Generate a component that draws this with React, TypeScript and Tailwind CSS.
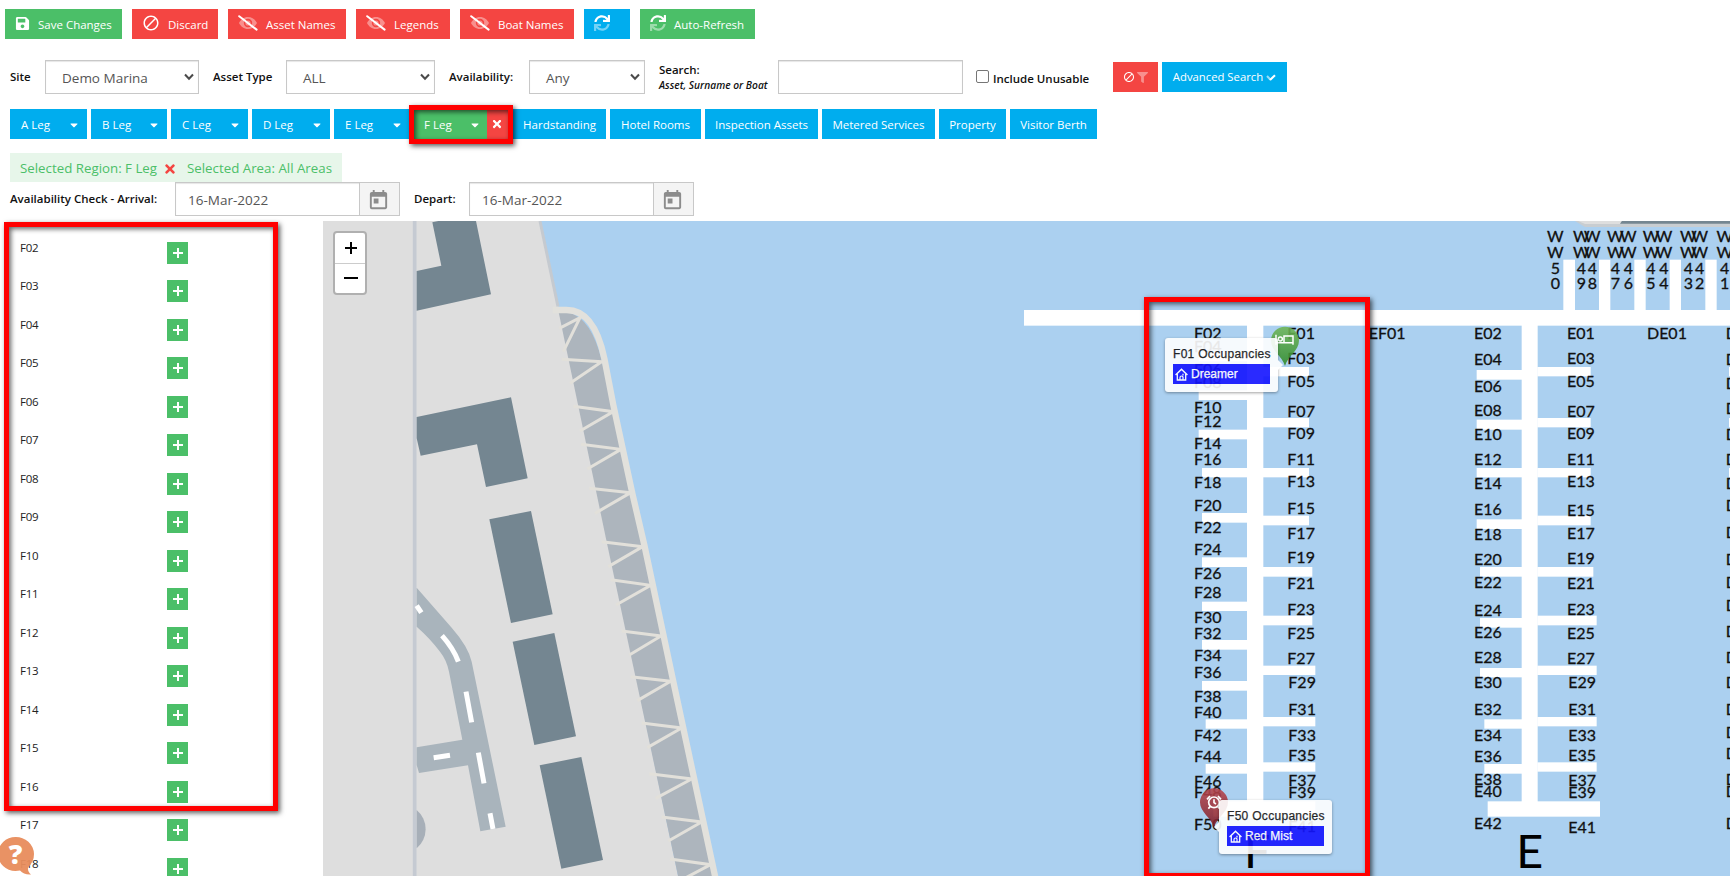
import React from "react";
import { FaSave, FaTimes, FaCaretDown, FaFilter } from "react-icons/fa";
import { MdBlock, MdToday } from "react-icons/md";

const BLUE = "bg-[#00adee]";
const GREEN = "bg-[#4bbf68]";
const RED = "bg-[#f44542]";

function EyeOff() {
  return (
    <svg viewBox="0 0 20 16" className="h-[16px] w-[20px]" fill="none">
      <path
        fillRule="evenodd"
        fill="#fff"
        opacity="0.4"
        d="M10 2C14 2 17.300 4.600 19 8 17.300 11.400 14 14 10 14S2.700 11.400 1 8C2.700 4.600 6 2 10 2ZM10 3.800A4.200 4.200 0 1 0 10 12.200A4.200 4.200 0 1 0 10 3.800ZM10 5.400A2.600 2.600 0 1 1 10 10.600A2.600 2.600 0 1 1 10 5.400Z"
      />
      <path d="M1.2 1.2 18.6 14.6" stroke="#fff" strokeWidth="2" strokeLinecap="round" />
    </svg>
  );
}

function Sync() {
  return (
    <svg viewBox="0 0 512 512" className="h-[16px] w-[16px]" fill="#fff">
      <path d="M440.65 12.57l4 82.77A247.16 247.16 0 0 0 255.83 8C134.73 8 33.91 94.92 12.29 209.82A12 12 0 0 0 24.09 224h49.05a12 12 0 0 0 11.67-9.26 175.91 175.91 0 0 1 317-56.94l-101.46-4.86a12 12 0 0 0-12.57 12v47.41a12 12 0 0 0 12 12H500a12 12 0 0 0 12-12V12a12 12 0 0 0-12-12h-47.37a12 12 0 0 0-11.98 12.57z" />
      <path
        opacity="0.45"
        d="M255.83 432a175.61 175.61 0 0 1-146-77.8l101.8 4.87a12 12 0 0 0 12.57-12v-47.4a12 12 0 0 0-12-12H12a12 12 0 0 0-12 12V500a12 12 0 0 0 12 12h47.35a12 12 0 0 0 12-12.6l-4.15-82.57A247.17 247.17 0 0 0 255.83 504c121.11 0 221.93-86.92 243.55-201.82a12 12 0 0 0-11.8-14.18h-49.05a12 12 0 0 0-11.67 9.26A175.86 175.86 0 0 1 255.83 432z"
      />
    </svg>
  );
}

function HouseIcon() {
  return (
    <svg viewBox="0 0 13 13" className="h-[13px] w-[13px]" fill="none" stroke="#fff">
      <path d="M0.600 7 6.500 1.200 12.400 7" strokeWidth="1.500" />
      <path d="M2.300 6V12H10.700V6" strokeWidth="1.300" />
      <path d="M5 12V9.500Q5 8 6.500 8T8 9V12M8 5.800V7.500" strokeWidth="1.200" />
    </svg>
  );
}

function ToolButton({ className, icon, label }: { className: string; icon: React.ReactNode; label?: string }) {
  return (
    <button className={`flex h-[30px] shrink-0 items-center pl-[10px] text-[11.5px] font-medium whitespace-nowrap text-white ${className}`}>
      <span className="-mt-[2px]">{icon}</span>
      {label && <span className="ml-[8px] pt-[2px]">{label}</span>}
    </button>
  );
}

function Select({ value, className }: { value: string; className: string }) {
  return (
    <div className={`flex h-[34px] shrink-0 items-center justify-between border border-[#c8c8c8] bg-white pr-[4px] pl-[16px] text-[13.5px] text-[#555] shadow-[inset_0_1px_1px_rgba(0,0,0,0.1)] ${className}`}>
      <span className="pt-[2px]">{value}</span>
      <svg viewBox="0 0 10 8" className="h-[8px] w-[10px]" fill="none" stroke="#4a4a4a" strokeWidth="2">
        <path d="M1 1.5 5 5.8 9 1.5" />
      </svg>
    </div>
  );
}

function DateInput({ value }: { value: string }) {
  return (
    <div className="flex h-[34px] w-[225px] shrink-0 border border-[#c8c8c8] shadow-[inset_0_1px_1px_rgba(0,0,0,0.1)]">
      <div className="flex flex-1 items-center pt-[3px] pl-[12px] text-[13.5px] text-[#555]">{value}</div>
      <div className="flex w-[40px] items-center justify-center border-l border-[#c8c8c8] bg-[#f4f4f4] pt-[2px] pr-[2px]">
        <MdToday className="h-[23px] w-[23px] text-[#8c8c8c]" />
      </div>
    </div>
  );
}

const LEGS = [
  { name: "A Leg", w: "w-[77px]" },
  { name: "B Leg", w: "w-[76px]" },
  { name: "C Leg", w: "w-[77px]" },
  { name: "D Leg", w: "w-[78px]" },
  { name: "E Leg", w: "w-[76px]" },
];

const AREAS = [
  { name: "Hardstanding", w: "w-[93px]" },
  { name: "Hotel Rooms", w: "w-[91px]" },
  { name: "Inspection Assets", w: "w-[113px]" },
  { name: "Metered Services", w: "w-[113px]" },
  { name: "Property", w: "w-[67px]" },
  { name: "Visitor Berth", w: "w-[87px]" },
];

const BERTHS = Array.from({ length: 17 }, (_, i) => `F${String(i + 2).padStart(2, "0")}`);

type Label = [string, number, number];

const column = (prefix: string, start: number, x: number, ys: number[]): Label[] =>
  ys.map((y, i) => [`${prefix}${String(start + i * 2).padStart(2, "0")}`, x, y]);

const LABELS: Label[] = [
  ...column("F", 2, 555, [372, 412, 482, 521, 595, 636, 704, 752, 820, 888, 956, 1020, 1093, 1151, 1224, 1273, 1340, 1391, 1461, 1509, 1579, 1643, 1716, 1750, 1846]),
  ...column("F", 1, 835, [372, 449, 517, 606, 672, 752, 818, 899, 972, 1046, 1122, 1201, 1272, 1347]),
  ...column("F", 29, 838, [1420, 1501, 1579, 1639, 1714, 1749, 1853]),
  ...column("E", 2, 1395, [372, 452, 531, 603, 677, 752, 822, 902, 977, 1050, 1120, 1204, 1269, 1345, 1421, 1500, 1578, 1642, 1710, 1748, 1843]),
  ...column("E", 1, 1674, [372, 449, 517, 606, 672, 752, 818, 904, 972, 1047, 1122, 1201, 1272, 1347]),
  ...column("E", 29, 1678, [1421, 1501, 1580, 1639, 1715, 1750, 1855]),
  ["EF01", 1079, 372],
  ["DE01", 1914, 372],
];

const D_ROWS = [372, 452, 524, 597, 677, 752, 822, 888, 970, 1050, 1120, 1190, 1268, 1345, 1421, 1500, 1570, 1633, 1712, 1747, 1842];

const WW: [string, number][] = [
  ["50", 1636], ["49", 1714], ["48", 1747], ["47", 1816], ["46", 1855], ["45", 1923],
  ["44", 1962], ["43", 2035], ["42", 2069], ["41", 2144],
];

// x, y, width, height
const DOCKS: [number, number, number, number][] = [
  [42, 285, 2120, 47],
  [711, 330, 49, 1480], [1535, 330, 48, 1450],
  [566, 410, 146, 29], [566, 526, 146, 29], [566, 644, 146, 29], [576, 759, 136, 28], [576, 894, 136, 29],
  [576, 1027, 136, 29], [576, 1160, 136, 28], [576, 1275, 136, 29], [576, 1398, 136, 29], [587, 1513, 125, 28], [587, 1647, 125, 29],
  [759, 456, 138, 28], [759, 609, 138, 28], [759, 759, 138, 28], [759, 902, 138, 29],
  [759, 1056, 148, 29], [759, 1202, 148, 29], [759, 1352, 157, 28], [759, 1506, 157, 28], [759, 1642, 157, 28], [610, 1759, 306, 46],
  [1400, 465, 136, 29], [1400, 614, 136, 30], [1400, 759, 136, 28], [1400, 913, 136, 29],
  [1410, 1056, 126, 29], [1410, 1209, 126, 29], [1410, 1359, 126, 28], [1423, 1513, 113, 28], [1423, 1647, 113, 29], [1433, 1759, 337, 46],
  [1582, 456, 160, 28], [1582, 609, 160, 28], [1582, 759, 160, 28], [1582, 902, 160, 29],
  [1582, 1056, 168, 29], [1582, 1202, 178, 29], [1582, 1352, 178, 28], [1582, 1506, 178, 28], [1582, 1642, 178, 28],
  [1660, 134, 35, 152], [1767, 134, 34, 152], [1873, 134, 34, 152], [1979, 134, 34, 152], [2086, 134, 34, 152],
  [2157, 456, 6, 28], [2157, 609, 6, 28], [2157, 759, 6, 28],
];

// apex on the rail followed by the two anchors on the quay
const STRUTS: number[][] = [
  [540, 308, 478, 340, 490, 410], [605, 440, 485, 433, 510, 505], [640, 590, 520, 574, 540, 648],
  [663, 703, 543, 688, 562, 762], [692, 833, 568, 820, 585, 895], [728, 995, 605, 980, 625, 1055],
  [752, 1111, 632, 1094, 648, 1170], [783, 1263, 665, 1248, 688, 1320], [812, 1399, 692, 1385, 712, 1457],
  [845, 1539, 725, 1524, 742, 1598], [875, 1692, 748, 1676, 767, 1750], [905, 1821, 785, 1806, 805, 1878],
  [932, 1949, 810, 1932, 850, 1992],
];

function Pin({ x, y, id, children }: { x: number; y: number; id: string; children: React.ReactNode }) {
  return (
    <g transform={`translate(${x} ${y})`}>
      <path d="M0 76C-8 46-42 30-42 0A42 42 0 0 1 42 0C42 30 8 46 0 76Z" fill={`url(#${id})`} opacity="0.88" />
      {children}
    </g>
  );
}

function MarinaMap() {
  return (
    <svg viewBox="323 221 1407 655" className="block h-[655px] w-[1407px]" fontFamily="Lato, sans-serif">
      <defs>
        <linearGradient id="green" x1="0" y1="0" x2="0" y2="1">
          <stop offset="0" stopColor="#6fb556" />
          <stop offset="1" stopColor="#2f8a2a" />
        </linearGradient>
        <linearGradient id="red" x1="0" y1="0" x2="0" y2="1">
          <stop offset="0" stopColor="#b8454c" />
          <stop offset="1" stopColor="#7c1c26" />
        </linearGradient>
      </defs>
      <rect x="323" y="221" width="1407" height="655" fill="#abd0f0" />

      <g transform="translate(400 215) scale(0.333333)">
        <path d="M-231 18H420L478 290L836 1992H-231Z" fill="#dedede" />
        <path d="M420 18 474 275" stroke="#c5cad0" strokeWidth="9" />
        <path d="M476 292H505Q575 310 606 440L735 1000 945 1992H836L622 990Z" fill="#adb5bd" />
        <g stroke="#e2e0da" strokeWidth="9" fill="none">
          {STRUTS.map((s) => (
            <path key={s[1]} d={`M${s[2]} ${s[3]} ${s[0]} ${s[1]} ${s[4]} ${s[5]}`} />
          ))}
        </g>
        <path d="M458 285H500C560 285 595 345 613 430L640 570 697 835 733 990 820 1400 947 1992" fill="none" stroke="#e2e1dc" strokeWidth="19" />
        <path d="M44 18V1992" stroke="#c5cad2" strokeWidth="11" />
        <g fill="#748691">
          <path d="M97 22 115 18H228L273 238 50 287V168L124 152Z" />
          <path d="M50 606 333 547 383 790 258 816 231 688 62 722 50 670Z" />
          <path d="M268 913 393 888 458 1198 333 1224Z" />
          <path d="M338 1280 463 1254 528 1564 403 1590Z" />
          <path d="M419 1651 544 1626 609 1935 484 1961Z" />
        </g>
        <path d="M50 1118 155 1238Q205 1295 215 1340L317 1835 241 1849 204 1651 57 1674 50 1650V1597L187 1574 147 1370Q140 1335 120 1310 90 1270 50 1235Z" fill="#a9b4bc" />
        <path d="M50 1785A75 75 0 0 1 50 1900Z" fill="#a7afb8" />
        <path d="M50 1172 64 1193M126 1262Q160 1300 175 1340M198 1430 215 1522M235 1613 252 1705M270 1795 279 1842M101 1628 150 1621" stroke="#fff" strokeWidth="15" fill="none" />
      </g>

      <g transform="translate(1010 215) scale(0.333333)">
        <path d="M1695 18H2160V36H1725Z" fill="#c8cdd1" />
        <path d="M1705 18H1835L1830 27H1725Z" fill="#dedede" />
        <path d="M1836 18H2160V26H1830Z" fill="#748691" />
        <g fill="#fff">
          {DOCKS.map((d, i) => (
            <rect key={i} x={d[0]} y={d[1]} width={d[2]} height={d[3]} />
          ))}
        </g>
        <g fontSize="48" fill="#111" stroke="#111" strokeWidth="0.9">
          {LABELS.map(([t, x, y]) => (
            <text key={t} x={x - 3} y={y - 1}>{t}</text>
          ))}
          {D_ROWS.map((y) => (
            <text key={y} x={2147} y={y - 1}>D</text>
          ))}
          {WW.map(([n, x]) => (
            <g key={n} textAnchor="middle">
              <text x={x} y={82}>W</text>
              <text x={x} y={129}>W</text>
              <text x={x} y={178}>{n[0]}</text>
              <text x={x} y={223}>{n[1]}</text>
            </g>
          ))}
        </g>
        <g fontSize="140" fill="#000">
          <text x="702" y="1960">F</text>
          <text x="1519" y="1960">E</text>
        </g>
        <Pin x={825} y={377} id="green">
          <g fill="none" stroke="#fff" strokeWidth="4.5">
            <path d="M-27-18V12M-27 6H24V12M24 6V-14H-3V6" />
            <circle cx="-14" cy="-5" r="6" />
          </g>
        </Pin>
        <Pin x={612} y={1762} id="red">
          <g fill="none" stroke="#fff" strokeWidth="5">
            <circle cx="0" cy="0" r="16" />
            <path d="M0-9V1L6 5M-21-9-12-19M21-9 12-19M-11 12-17 19M11 12 17 19" />
          </g>
        </Pin>
      </g>
    </svg>
  );
}

function Tooltip({ title, name, className, side }: { title: string; name: string; className: string; side: "left" | "right" }) {
  return (
    <div className={`absolute h-[54px] w-[113px] rounded-[3px] bg-white pt-[8px] pl-[8px] font-['Liberation_Sans',Arial,sans-serif] opacity-90 shadow-[0_1px_3px_rgba(0,0,0,0.4)] ${className}`}>
      <svg viewBox="0 0 6 12" className={side === "right" ? "absolute top-[21px] -right-[5px] h-[12px] w-[6px]" : "absolute top-[21px] -left-[5px] h-[12px] w-[6px] rotate-180"}>
        <path d="M0 0 6 6 0 12Z" fill="#fff" />
      </svg>
      <div className="h-[18px] text-[12px] leading-[16px] tracking-[0.3px] whitespace-nowrap text-[#111] [-webkit-text-stroke:0.25px_#111]">{title}</div>
      <div className="flex h-[20px] w-[97px] items-center bg-[#1414ff] pl-[2px] text-[12px] text-white [-webkit-text-stroke:0.25px_#fff]">
        <HouseIcon />
        <span className="ml-[3px]">{name}</span>
      </div>
    </div>
  );
}

const FRAME = "pointer-events-none absolute border-[5px] border-[#ff0000] shadow-[2px_2px_5px_rgba(0,0,0,0.65),inset_2px_2px_5px_rgba(0,0,0,0.6)]";

export default function App() {
  return (
    <div className="relative flex h-[876px] w-[1730px] flex-col overflow-hidden bg-white font-['Open_Sans','Noto_Sans',sans-serif]">
      <div className="flex gap-[10px] pt-[9px] pl-[5px]">
        <ToolButton className={`w-[117px] ${GREEN}`} icon={<FaSave className="h-[15px] w-[15px]" />} label="Save Changes" />
        <ToolButton className={`w-[86px] ${RED}`} icon={<MdBlock className="h-[18px] w-[18px]" />} label="Discard" />
        <ToolButton className={`w-[118px] ${RED}`} icon={<EyeOff />} label="Asset Names" />
        <ToolButton className={`w-[94px] ${RED}`} icon={<EyeOff />} label="Legends" />
        <ToolButton className={`w-[114px] ${RED}`} icon={<EyeOff />} label="Boat Names" />
        <ToolButton className={`w-[46px] ${BLUE}`} icon={<Sync />} />
        <ToolButton className={`w-[115px] ${GREEN}`} icon={<Sync />} label="Auto-Refresh" />
      </div>

      <div className="mt-[21px] flex h-[34px] items-center pl-[10px] text-[11.5px] font-semibold whitespace-nowrap text-[#111]">
        <label className="w-[35px]">Site</label>
        <Select value="Demo Marina" className="w-[154px] font-normal" />
        <label className="ml-[14px] w-[73px]">Asset Type</label>
        <Select value="ALL" className="w-[149px] font-normal" />
        <label className="ml-[14px] w-[80px]">Availability:</label>
        <Select value="Any" className="w-[116px] font-normal" />
        <div className="ml-[14px] flex w-[119px] flex-col">
          <span className="leading-[16px]">Search:</span>
          <span className="text-[10.2px] leading-[14px] italic">Asset, Surname or Boat</span>
        </div>
        <div className="h-[34px] w-[185px] border border-[#c8c8c8] shadow-[inset_0_1px_1px_rgba(0,0,0,0.1)]" />
        <div className="-mt-[2px] ml-[13px] h-[13px] w-[13px] rounded-[2px] border border-[#767676]" />
        <span className="ml-[4px] w-[120px] pt-[3px]">Include Unusable</span>
        <button className={`flex h-[30px] w-[45px] items-center justify-center gap-[2px] text-white ${RED}`}>
          <MdBlock className="h-[12px] w-[12px]" stroke="#fff" />
          <FaFilter className="h-[11px] w-[11px] opacity-40" />
        </button>
        <button className={`ml-[4px] flex h-[30px] w-[125px] items-center justify-center gap-[3px] pt-[1px] text-[11.3px] font-medium text-white ${BLUE}`}>
          Advanced Search
          <svg viewBox="0 0 10 8" className="h-[8px] w-[10px]" fill="none" stroke="#fff" strokeWidth="2">
            <path opacity="0.6" d="M1 2 4.5 5.8" />
            <path d="M4 6 9 1.2" />
          </svg>
        </button>
      </div>

      <div className="mt-[15px] flex h-[30px] gap-[4px] pl-[10px] text-[11.5px] font-medium whitespace-nowrap text-white">
        {LEGS.map((l) => (
          <button key={l.name} className={`flex shrink-0 items-center justify-between pt-[2px] pr-[9px] pl-[11px] ${BLUE} ${l.w}`}>
            {l.name}
            <FaCaretDown className="h-[12px] w-[8px]" />
          </button>
        ))}
        <div className="-ml-[1px] flex w-[96px] shrink-0">
          <button className={`flex flex-1 items-center justify-between pt-[2px] pr-[8px] pl-[11px] ${GREEN}`}>
            F Leg
            <FaCaretDown className="h-[12px] w-[8px]" />
          </button>
          <button className={`flex w-[22px] items-center justify-center pr-[2px] ${RED}`}>
            <FaTimes className="h-[12px] w-[12px]" />
          </button>
        </div>
        {AREAS.map((a) => (
          <button key={a.name} className={`flex shrink-0 items-center justify-center pt-[2px] ${BLUE} ${a.w}`}>{a.name}</button>
        ))}
      </div>

      <div className="mt-[14px] ml-[10px] flex h-[29px] w-[332px] items-center bg-[#e7f6ea] pt-[2px] pl-[10px] text-[13.3px] whitespace-nowrap text-[#4bbf68]">
        <span className="w-[143px]">Selected Region: F Leg</span>
        <FaTimes className="h-[14px] w-[14px] text-[#f44542]" />
        <span className="ml-[10px]">Selected Area: All Areas</span>
      </div>

      <div className="flex h-[34px] items-center pl-[10px] text-[11.5px] font-semibold whitespace-nowrap text-[#111]">
        <label className="w-[165px]">Availability Check - Arrival:</label>
        <div className="font-normal"><DateInput value="16-Mar-2022" /></div>
        <label className="ml-[14px] w-[55px]">Depart:</label>
        <div className="font-normal"><DateInput value="16-Mar-2022" /></div>
      </div>

      <div className="mt-[5px] flex h-[655px]">
        <div className="flex w-[323px] shrink-0 flex-col pt-[20.6px] pl-[20px]">
          {BERTHS.map((b) => (
            <div key={b} className="flex h-[38.5px] shrink-0 items-start">
              <span className="w-[147px] text-[11.5px] leading-[12px] tracking-[-0.2px] text-[#222]">{b}</span>
              <button className={`flex h-[22px] w-[21px] items-center justify-center ${GREEN}`}>
                <svg viewBox="0 0 10 10" className="h-[10px] w-[10px]" stroke="#fff" strokeWidth="2">
                  <path d="M5 0V10M0 5H10" />
                </svg>
              </button>
            </div>
          ))}
        </div>
        <div className="relative h-[655px] w-[1407px] overflow-hidden">
          <MarinaMap />
          <div className="absolute top-[10px] left-[10px] flex h-[64px] w-[34px] flex-col rounded-[4px] border-2 border-[#b0b0b0] bg-white">
            <div className="flex flex-1 items-center justify-center border-b border-[#ccc] pl-[1px]">
              <svg viewBox="0 0 14 14" className="h-[14px] w-[14px]" stroke="#000" strokeWidth="2"><path d="M7 1V13M1 7H13" /></svg>
            </div>
            <div className="flex flex-1 items-center justify-center pl-[2px]">
              <svg viewBox="0 0 14 14" className="h-[14px] w-[14px]" stroke="#000" strokeWidth="2"><path d="M0 7H14" /></svg>
            </div>
          </div>
          <Tooltip title="F01 Occupancies" name="Dreamer" side="right" className="top-[117px] left-[842px]" />
          <Tooltip title="F50 Occupancies" name="Red Mist" side="left" className="top-[579px] left-[896px]" />
          <div className={`top-[76px] left-[821px] h-[581px] w-[226px] ${FRAME}`} />
        </div>
      </div>

      <div className={`top-[105px] left-[409px] h-[39px] w-[104px] ${FRAME}`} />
      <div className={`top-[222px] left-[4px] h-[589px] w-[274px] ${FRAME}`} />
      <svg viewBox="0 0 36 40" className="absolute top-[836px] left-0 h-[40px] w-[36px] opacity-95">
        <path d="M15.5 1A17.5 17 0 0 0 15.5 35Q18 35 20 34.6 24 39 31 38.5 27.500 36 28 31.500 34 26 34 18A18 17.500 0 0 0 15.500 1Z" fill="#e88d5c" />
        <text x="15.500" y="28" textAnchor="middle" fontSize="27" fontWeight="800" fill="#fff" fontFamily="Open Sans">?</text>
      </svg>
    </div>
  );
}
